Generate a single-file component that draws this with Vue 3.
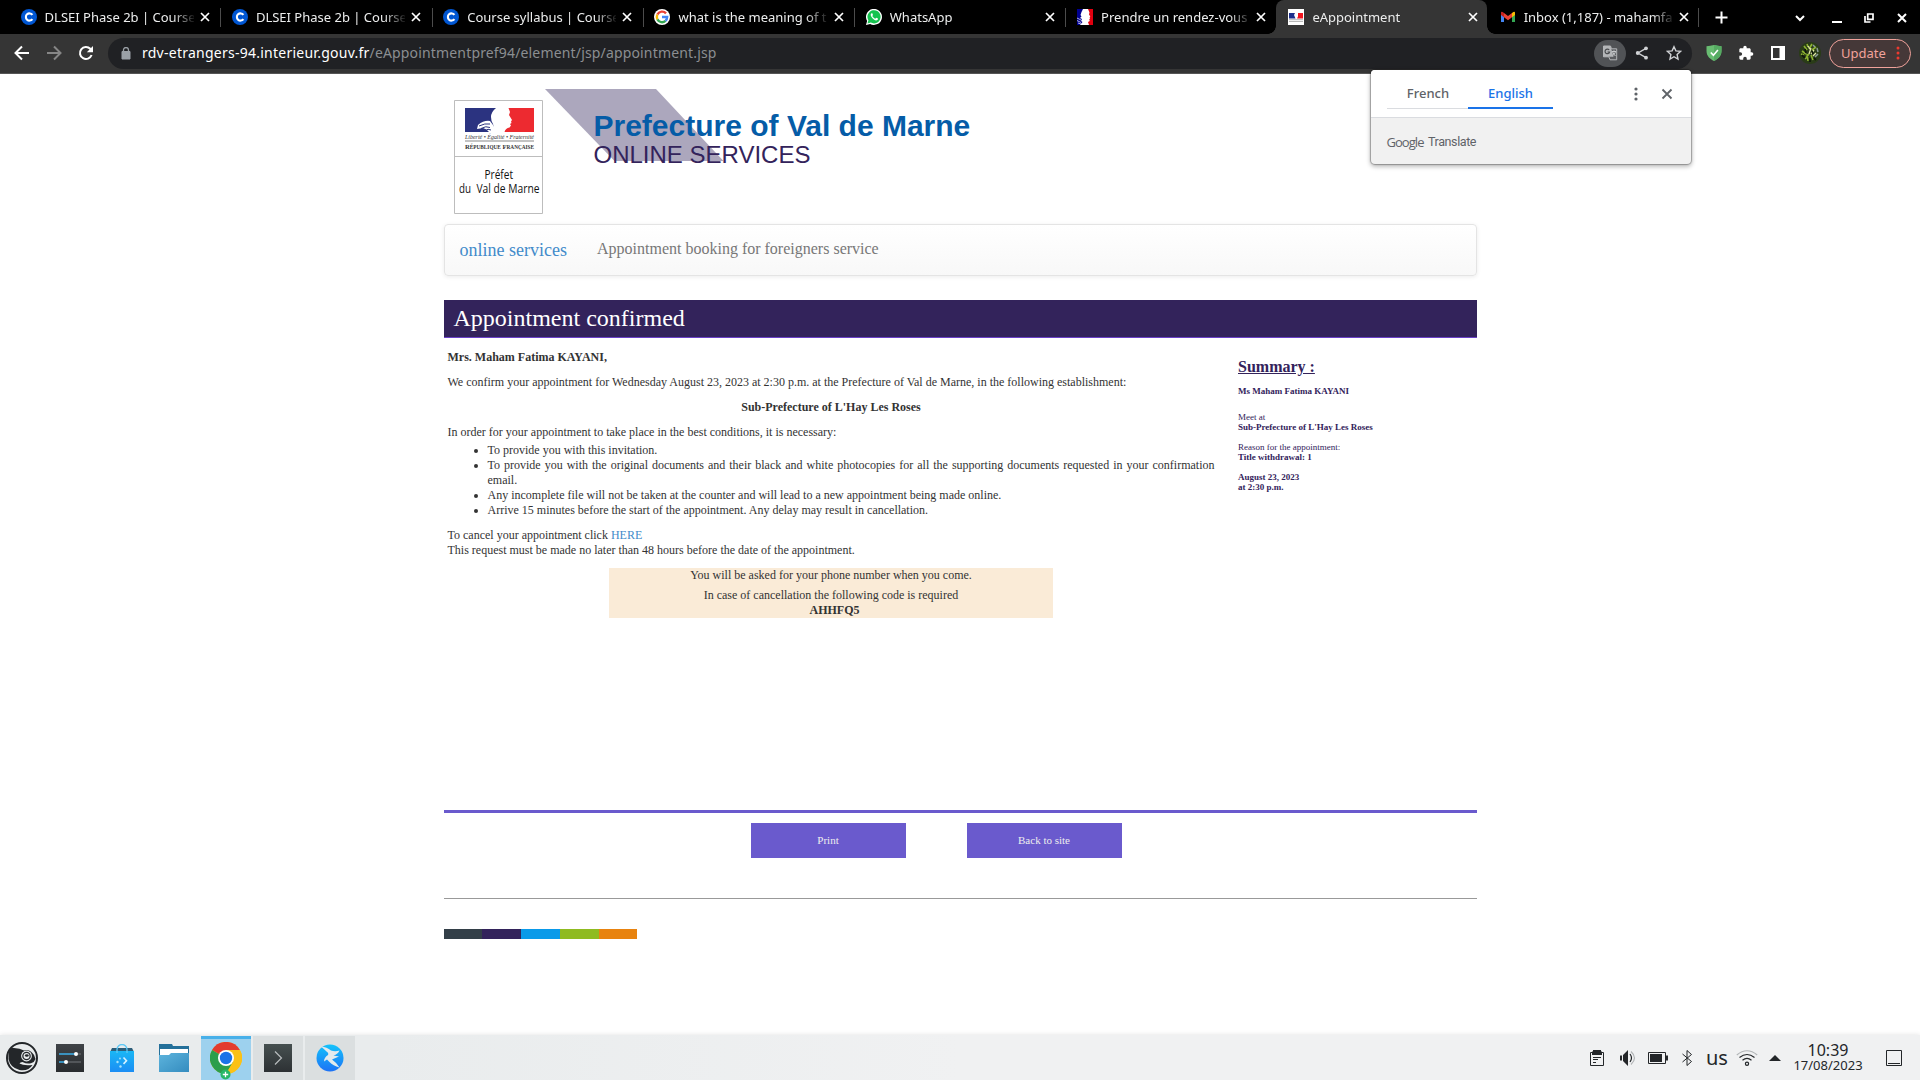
<script setup>
const tabs = [
  { icon: 'coursera', title: 'DLSEI Phase 2b | Coursera' },
  { icon: 'coursera', title: 'DLSEI Phase 2b | Coursera', sep: true },
  { icon: 'coursera', title: 'Course syllabus | Coursera', sep: true },
  { icon: 'google', title: 'what is the meaning of tit', sep: true },
  { icon: 'whatsapp', title: 'WhatsApp', sep: true },
  { icon: 'marianne', title: 'Prendre un rendez-vous', sep: true },
  { icon: 'pref', title: 'eAppointment', active: true },
  { icon: 'gmail', title: 'Inbox (1,187) - mahamfatima' },
]
const stripes = ['#333f48', '#33235b', '#0a9ae9', '#8fbb21', '#e8830f']
</script>

<template>
  <div class="screen">
    <div class="tabstrip">
      <div v-for="(t, i) in tabs" :key="i" class="tab" :class="{ active: t.active, sep: t.sep }">
        <svg v-if="t.icon === 'coursera'" class="fav" viewBox="0 0 16 16">
          <circle cx="8" cy="8" r="8" fill="#0056d2" />
          <path d="M11.4 10.1A3.6 3.6 0 1 1 11.4 5.9" fill="none" stroke="#fff" stroke-width="2.1" />
        </svg>
        <svg v-else-if="t.icon === 'google'" class="fav" viewBox="0 0 16 16">
          <circle cx="8" cy="8" r="8" fill="#fff" />
          <g fill="none" stroke-width="2.4">
            <path d="M12 4.4A5.2 5.2 0 0 0 3.4 5.6" stroke="#ea4335" />
            <path d="M3.4 5.6A5.2 5.2 0 0 0 3.4 10.4" stroke="#fbbc05" />
            <path d="M3.4 10.4A5.2 5.2 0 0 0 11.5 11.8" stroke="#34a853" />
            <path d="M11.5 11.8A5.2 5.2 0 0 0 13.2 8H8" stroke="#4285f4" />
          </g>
        </svg>
        <svg v-else-if="t.icon === 'whatsapp'" class="fav" viewBox="0 0 16 16">
          <path d="M0 16L1.1 12A8 8 0 1 1 4.1 14.9Z" fill="#fff" />
          <path d="M1.5 14.5l.9-3.2A6.6 6.6 0 1 1 4.8 13.600Z" fill="#15c34f" />
          <path d="M5.500 4.200c-1.200.8-1 2.300.2 4 1.500 2.200 3.700 3.600 5.200 3.100 1-.4 1.200-1.200 1.100-1.700l-1.800-.9-.9 1.100c-1.300-.4-2.500-1.600-3-2.700l.7-1-.7-1.800z" fill="#fff" />
        </svg>
        <svg v-else-if="t.icon === 'marianne'" class="fav" viewBox="0 0 16 16">
          <path d="M0 0h16v16H0z" fill="#fff" />
          <path d="M0 0h6L4.500 3 3.500 6l1 1.500L3 9l2 1-1 2 1.500 1L3 16H0z" fill="#000091" />
          <path d="M11 0h5v16h-4l-1-3 1.800-1-.6-1.500.8-1-.4-1 .7-1L12 5.500l.5-2z" fill="#e1000f" />
          <path d="M0 9l4 2M0 11.500l4 2M1 14l3 1" stroke="#fff" stroke-width=".7" />
        </svg>
        <svg v-else-if="t.icon === 'pref'" class="fav" viewBox="0 0 16 16">
          <path d="M0 0h16v16H0z" fill="#fff" />
          <path d="M1 4h6L6 6l1.500 3.500H1z" fill="#1d2f8c" />
          <path d="M10 4h5v5.500H9l1-2z" fill="#f21620" />
          <path d="M1 10.700h14M1 12.500h14" stroke="#999" stroke-width=".7" />
        </svg>
        <svg v-else class="fav" viewBox="0 0 16 16">
          <path d="M1 3v10h3V6.500z" fill="#4285f4" />
          <path d="M15 3v10h-3V6.500z" fill="#34a853" />
          <path d="M12 4l1.300-1Q15 2 15 4v2l-3 2.200z" fill="#fbbc04" />
          <path d="M4 4L2.700 3Q1 2 1 4v2l3 2.200z" fill="#c5221f" />
          <path d="M4 3.900l4 3 4-3v4.300l-4 3-4-3z" fill="#ea4335" />
        </svg>
        <span class="title">{{ t.title }}</span>
        <svg class="x" viewBox="0 0 10 10"><path d="M1 1l8 8M9 1l-8 8" /></svg>
      </div>
      <div class="tab-end">
        <svg width="13" height="13" viewBox="0 0 13 13"><path d="M6.500.5v12M.5 6.500h12" stroke="#fff" stroke-width="2" /></svg>
      </div>
      <div class="win">
        <svg width="12" height="16" viewBox="0 0 12 16"><path d="M2 6l4 4 4-4" fill="none" stroke="#fff" stroke-width="2" /></svg>
        <svg width="10" height="16" viewBox="0 0 10 16"><path d="M0 12h10" stroke="#fff" stroke-width="2" /></svg>
        <svg width="10" height="16" viewBox="0 0 10 16"><path d="M3.700 4h5.300v5.300H3.700zM1 6v6h5.500" fill="none" stroke="#fff" stroke-width="1.700" /></svg>
        <svg width="10" height="16" viewBox="0 0 10 16"><path d="M1 4l8 8M9 4l-8 8" stroke="#fff" stroke-width="2" /></svg>
      </div>
    </div>

    <div class="toolbar">
      <div class="nav">
        <svg width="16" height="16" viewBox="0 0 16 16"><path d="M15 8H2M8 1.500L1.500 8 8 14.500" fill="none" stroke="#fff" stroke-width="2" /></svg>
        <svg width="16" height="16" viewBox="0 0 16 16"><path d="M1 8h13M8 1.500L14.500 8 8 14.500" fill="none" stroke="#868686" stroke-width="2" /></svg>
        <svg width="16" height="16" viewBox="0 0 16 16"><path d="M13.600 10A6 6 0 1 1 12.300 3.800L14 5.500" fill="none" stroke="#fff" stroke-width="2" /><path d="M15 1v6.200H8.800z" fill="#fff" /></svg>
      </div>
      <div class="omnibox">
        <svg width="10" height="13" viewBox="0 0 10 13"><path d="M1 4.500h8V12H1z" fill="#9aa0a6" stroke="#9aa0a6" stroke-linejoin="round" /><path d="M2.500 5V3a2.500 2.500 0 0 1 5 0v2" fill="none" stroke="#9aa0a6" stroke-width="1.300" /></svg>
        <span class="url"><b>rdv-etrangers-94.interieur.gouv.fr</b><i>/eAppointmentpref94/element/jsp/appointment.jsp</i></span>
        <span class="tr-btn">
          <svg width="16" height="16" viewBox="0 0 16 16"><path d="M1.500 1h7l1 2.800h5.200v11H8l-1.200-3H1.500z" fill="#5b5d60" stroke="#b4b6b8" /><path d="M1 1h7.500l3 10.700H1z" fill="#b4b6b8" /><path d="M7.200 5A2.300 2.300 0 1 0 7.600 7H5.500" fill="none" stroke="#4a4c4f" stroke-width="1.200" /><path d="M10 6.500h4M12 5.300v1.200M13.400 6.700c-.4 1.800-1.500 3.200-2.700 4M10.700 7c.5 1.600 1.600 3 2.800 4" fill="none" stroke="#c6c8ca" /></svg>
        </span>
        <svg class="share" width="14" height="14" viewBox="0 0 14 14"><path d="M11 2.300L3 7l8 4.700" fill="none" stroke="#d0d2d5" stroke-width="1.400" /><g fill="#d0d2d5"><circle cx="11" cy="2.300" r="1.900" /><circle cx="2.700" cy="7" r="1.900" /><circle cx="11" cy="11.700" r="1.900" /></g></svg>
        <svg class="star" width="16" height="16" viewBox="0 0 16 16"><path d="M8 1.700l1.900 4.200 4.600.5-3.400 3.100.9 4.500-4-2.300L4 14l.9-4.500L1.500 6.400l4.600-.5z" fill="none" stroke="#d0d2d5" stroke-width="1.400" /></svg>
      </div>
      <div class="ext">
        <svg width="16" height="16" viewBox="0 0 16 16"><path d="M8 0c2.500.7 5 1.200 7.500 1.200V6c0 5-3.500 8-7.500 10C4 14 .5 11 .5 6V1.200C3 1.200 5.500.7 8 0z" fill="#68bc71" /><path d="M8 0c2.500.7 5 1.200 7.500 1.200V6c0 5-3.500 8-7.500 10z" fill="#56ab62" /><path d="M4.800 7.500l2.600 2.800 4.500-5.300" fill="none" stroke="#fff" stroke-width="1.600" /></svg>
        <svg width="16" height="16" viewBox="0 0 24 24"><path d="M20.500 11H19V7c0-1.100-.9-2-2-2h-4V3.500a2.500 2.500 0 0 0-5 0V5H4c-1.100 0-2 .9-2 2v3.800h1.500a2.700 2.700 0 0 1 0 5.400H2V20c0 1.100.9 2 2 2h3.800v-1.500a2.700 2.700 0 0 1 5.400 0V22H17c1.100 0 2-.9 2-2v-4h1.500a2.500 2.500 0 0 0 0-5z" fill="#fff" /></svg>
        <svg width="16" height="16" viewBox="0 0 16 16"><path d="M1 1h14v14H1z" fill="#fff" /><path d="M3 3h6.500v10H3z" fill="#353535" /></svg>
        <svg width="22" height="22" viewBox="0 0 22 22">
          <circle cx="11" cy="11" r="11" fill="#2a3c18" />
          <path d="M5 4l3 4M13 2l-3 5M17 5l-4 3M3 9l4 3M6 17l4-5M12 13l2 5M8 12l1 7M2 12l3 1M8 2l1 3" stroke="#8eb431" stroke-width="1.600" />
          <path d="M9 4l2 3M15 8l-3 4M12 6l-2 6M17 11l-3 3" stroke="#dfe5a5" stroke-width="1.300" />
          <path d="M3 13l3 3M6 7l1 4M15 16l2 2M11 16v4M13 9l1 3" stroke="#0f180a" stroke-width="1.800" />
          <path d="M18 6l1 4M16 15l3-3M14 3l2 2" stroke="#8d9c9a" stroke-width="1.500" />
        </svg>
      </div>
      <div class="update">
        <span>Update</span>
        <svg width="4" height="16" viewBox="0 0 4 16" fill="#ee3a2f"><circle cx="2" cy="3" r="1.500" /><circle cx="2" cy="8" r="1.500" /><circle cx="2" cy="13" r="1.500" /></svg>
      </div>
    </div>

    <div class="popup">
      <div class="pop-head">
        <span class="lang">French</span>
        <span class="lang on">English</span>
        <svg class="dots" width="4" height="14" viewBox="0 0 4 14" fill="#5f6368"><circle cx="2" cy="2" r="1.600" /><circle cx="2" cy="7" r="1.600" /><circle cx="2" cy="12" r="1.600" /></svg>
        <svg class="pclose" width="12" height="12" viewBox="0 0 12 12"><path d="M1.500 1.500l9 9M10.500 1.500l-9 9" stroke="#5f6368" stroke-width="1.800" /></svg>
      </div>
      <div class="pop-foot"><b>Google</b><span>Translate</span></div>
    </div>

    <main class="page">
      <header>
        <svg class="band" width="180" height="72" viewBox="0 0 180 72"><path d="M0 0h111l67.500 72H69.500z" fill="#aca7bd" /></svg>
        <svg class="logo" width="90" height="115" viewBox="0 0 90 115">
          <path d="M.5.500h88v113H.5z" fill="#fff" stroke="#bdbdbd" /><path d="M0 56.500h89" stroke="#bdbdbd" />
          <path d="M11 8h31q-5 4-5 9 0 4 2 7l2 8H11z" fill="#2b3380" />
          <path d="M54.500 8H80v24H50.500q1-4 5-4.500l1.500-2-1-1.500 1.500-1-.5-1.500 1-1.500-3-5 1-3z" fill="#ed2a30" />
          <path d="M24 25q6-5 12-4l3 4 4 7H35q-2-3-6-4l-6 1z" fill="#fff" />
          <path d="M25 26q6-3 11-2M27 28.500q5-3 9-1M31 31q3-3 6-1" fill="none" stroke="#2b3380" stroke-width="1" />
          <text x="11" y="38.500" textLength="69" lengthAdjust="spacingAndGlyphs" class="motto">Liberté • Égalité • Fraternité</text>
          <path d="M11 41h69" stroke="#555" stroke-width=".7" />
          <text x="11" y="48.500" textLength="69" lengthAdjust="spacingAndGlyphs" class="rf">R<tspan class="sc">ÉPUBLIQUE</tspan> F<tspan class="sc">RANÇAISE</tspan></text>
          <text x="30.500" y="78.500" textLength="28.500" lengthAdjust="spacingAndGlyphs" class="pf">Préfet</text>
          <text x="5" y="93" textLength="12" lengthAdjust="spacingAndGlyphs" class="pf">du</text>
          <text x="22.500" y="93" textLength="63" lengthAdjust="spacingAndGlyphs" class="pf">Val de Marne</text>
        </svg>
        <div class="names">
          <h1>Prefecture of Val de Marne</h1>
          <h2>ONLINE SERVICES</h2>
        </div>
      </header>

      <nav class="navbar">
        <a class="brand">online services</a>
        <span>Appointment booking for foreigners service</span>
      </nav>

      <h3 class="banner">Appointment confirmed</h3>

      <div class="cols">
        <section class="letter">
          <p><b>Mrs. Maham Fatima KAYANI,</b></p>
          <p>We confirm your appointment for Wednesday August 23, 2023 at 2:30 p.m. at the Prefecture of Val de Marne, in the following establishment:</p>
          <p class="mid"><b>Sub-Prefecture of L'Hay Les Roses</b></p>
          <p class="lead">In order for your appointment to take place in the best conditions, it is necessary:</p>
          <ul>
            <li>To provide you with this invitation.</li>
            <li>To provide you with the original documents and their black and white photocopies for all the supporting documents requested in your confirmation email.</li>
            <li>Any incomplete file will not be taken at the counter and will lead to a new appointment being made online.</li>
            <li>Arrive 15 minutes before the start of the appointment. Any delay may result in cancellation.</li>
          </ul>
          <p>To cancel your appointment click <a>HERE</a><br />This request must be made no later than 48 hours before the date of the appointment.</p>
          <div class="code">
            <div>You will be asked for your phone number when you come.</div>
            <div class="second">In case of cancellation the following code is required<br /><b>AHHFQ5</b></div>
          </div>
        </section>
        <aside>
          <h4>Summary :</h4>
          <p class="who"><b>Ms Maham Fatima KAYANI</b></p>
          <p>Meet at<br /><b>Sub-Prefecture of L'Hay Les Roses</b></p>
          <p>Reason for the appointment:<br /><b>Title withdrawal: 1</b></p>
          <p><b>August 23, 2023<br />at 2:30 p.m.</b></p>
        </aside>
      </div>

      <div class="actions">
        <a>Print</a>
        <a>Back to site</a>
      </div>
      <div class="rule"></div>
      <div class="stripes"><i v-for="c in stripes" :key="c" :style="{ background: c }"></i></div>
    </main>

    <footer class="taskbar">
      <div class="launch">
        <span class="task first">
          <svg width="32" height="32" viewBox="0 0 32 32"><circle cx="16" cy="16" r="15" fill="#e9eced" stroke="#232629" stroke-width="2" /><path d="M2.500 9Q5 4.500 8 6q6 0 10 2.500 4-1.500 7.500 1.500 3.500 3 4 7-1 3-4 4-4 1.500-9-1-2.500 0-3 1.500 4 2.500 13 1.500-4 6.500-13 5Q4 25.500 2.500 17z" fill="#232629" /><circle cx="20.500" cy="14" r="5.400" fill="#e9eced" /><circle cx="20.500" cy="14" r="4.300" fill="#232629" /><circle cx="20.500" cy="14" r="3" fill="#e9eced" /><ellipse cx="20.800" cy="13.500" rx="1.900" ry="1.200" fill="#232629" /></svg>
        </span>
        <span class="task">
          <svg width="28" height="28" viewBox="0 0 28 28"><defs><linearGradient id="dk" x2="0" y2="1"><stop stop-color="#3f4347" /><stop offset="1" stop-color="#292c2f" /></linearGradient></defs><path d="M0 0h28v28H0z" fill="url(#dk)" /><path d="M3 10h17M3 18h7" stroke="#3daee9" stroke-width="1.600" /><path d="M20 10h5M10 18h15" stroke="#5d6266" stroke-width="1.600" /><circle cx="20" cy="10" r="2" fill="#fff" /><circle cx="10" cy="18" r="2" fill="#fff" /></svg>
        </span>
        <span class="task">
          <svg width="26" height="28" viewBox="0 0 26 28"><defs><linearGradient id="bl" x2="0" y2="1"><stop stop-color="#1ab7f5" /><stop offset="1" stop-color="#1b8df4" /></linearGradient></defs><path d="M3 4h20l2 4H1z" fill="#2d5e7a" /><path d="M1 7h24v21H1z" fill="url(#bl)" /><path d="M8 9V5.500a5 5 0 0 1 10 0V9" fill="none" stroke="#5ec8f5" stroke-width="1.300" /><path d="M14.500 13.500l3 3.200-3 3.200" fill="none" stroke="#d7f2ff" stroke-width="1.600" /><g fill="#a5e2fb"><circle cx="8.500" cy="18" r="1.200" /><circle cx="11" cy="14.500" r=".9" /><circle cx="11.500" cy="22.500" r="1.200" /></g></svg>
        </span>
        <span class="task">
          <svg width="30" height="28" viewBox="0 0 30 28"><defs><linearGradient id="fo" x2="1" y2="1"><stop stop-color="#5db4dd" /><stop offset="1" stop-color="#348cbf" /></linearGradient></defs><path d="M0 0h13l1 2h16v12H0z" fill="#24709a" /><path d="M1 5h28v7H1z" fill="#fff" /><path d="M0 11h10l2-2h18v19H0z" fill="url(#fo)" /></svg>
        </span>
        <span class="task open cur">
          <svg width="32" height="38" viewBox="0 0 32 38"><circle cx="16" cy="16" r="16" fill="#fbc116" /><path d="M16 16L2.100 8A16 16 0 0 1 29.900 8z" fill="#e33b2e" /><path d="M2.100 8A16 16 0 0 0 16 32l7-12-7-4z" fill="#2c9e4b" /><path d="M16 16V8h13.900A16 16 0 0 1 16 32l7-12z" fill="#fbc116" /><circle cx="16" cy="16" r="8" fill="#fff" /><circle cx="16" cy="16" r="6.200" fill="#1a73e8" /><circle cx="15.500" cy="32.500" r="5" fill="#27b768" /><path d="M15.500 29.800v5.400M12.800 32.500h5.400" stroke="#fff" stroke-width="1.300" /></svg>
        </span>
        <span class="task open">
          <svg width="28" height="28" viewBox="0 0 28 28"><defs><linearGradient id="tm" x2="0" y2="1"><stop stop-color="#465050" /><stop offset="1" stop-color="#2d3134" /></linearGradient></defs><path d="M0 0h28v28H0z" fill="url(#tm)" /><path d="M11 7.500l6.500 6.500-6.500 6.500" fill="none" stroke="#b9bdbf" stroke-width="1.200" /></svg>
        </span>
        <span class="task open">
          <svg width="28" height="28" viewBox="0 0 28 28"><defs><linearGradient id="kt" x2="0" y2="1"><stop stop-color="#14c3fb" /><stop offset="1" stop-color="#1d72f5" /></linearGradient></defs><circle cx="14" cy="14" r="13.500" fill="url(#kt)" /><path d="M5 2.500Q11 3 15 6.500 19 8 23.500 6.500 22 10 17.500 11.500L23 12.500 16 15.500Q21 19 23.500 23.500 17 21.500 13.500 18L11 15.500 8 17.500Q8 13.500 12 11 13 9 10.500 7.500 8 5 5 2.500z" fill="#e4eaed" /></svg>
        </span>
      </div>
      <div class="tray">
        <svg class="clip" width="14" height="16" viewBox="0 0 14 16"><path d="M.5 2.500h13v13H.5z" fill="none" stroke="#232629" /><path d="M3 0h8v1.500h1V5H2V1.500h1z" fill="#232629" /><path d="M3 7.500h8M3 9.500h5M3 12.500h3" stroke="#232629" /></svg>
        <svg class="vol" width="16" height="16" viewBox="0 0 16 16"><path d="M0 5.500h2v5H0zM3 5l5-5v16l-5-5z" fill="#232629" /><path d="M10 4q3 4 0 8" fill="none" stroke="#232629" stroke-width="1.200" /><path d="M11 1.500q7 6.500 0 13" fill="none" stroke="#b2b5b7" stroke-width="1.200" /></svg>
        <svg class="bat" width="20" height="12" viewBox="0 0 20 12"><path d="M.5.500h17v11H.5z" fill="none" stroke="#232629" /><path d="M2 2h12v8H2zM18 3.500h2v5h-2z" fill="#232629" /></svg>
        <svg class="bt" width="10" height="16" viewBox="0 0 10 16"><path d="M.5 4l9 7.500-4.500 4V.5l4.500 4-9 7.500" fill="none" stroke="#232629" /></svg>
        <span class="kb">us</span>
        <svg class="wifi" width="22" height="16" viewBox="0 0 22 16" fill="none" stroke="#232629" stroke-width="1.200"><path d="M.8 5q10.200-8.500 20.400 0" stroke="#b2b5b7" /><path d="M3.500 7.500q7.500-6 15 0M6.500 10.200q4.500-3.500 9 0" /><circle cx="11" cy="13.700" r="1.600" /></svg>
        <svg class="tri" width="12" height="6" viewBox="0 0 12 6"><path d="M6 0l6 6H0z" fill="#232629" /></svg>
        <div class="clock"><span>10:39</span><small>17/08/2023</small></div>
        <svg class="desk" width="16" height="16" viewBox="0 0 16 16"><path d="M.5.500h15v15H.5zM2 13.500h12" fill="none" stroke="#232629" /></svg>
      </div>
    </footer>
  </div>
</template>

<style>
body { margin: 0; overflow: hidden; background: #fff; }
</style>

<style scoped>
.screen { position: relative; width: 1920px; height: 1080px; display: flex; flex-direction: column; overflow: hidden; background: #fff; font-family: "Noto Sans", sans-serif; }
svg { display: block; flex: none; }
.tabstrip { height: 34px; background: #000; display: flex; padding-left: 8px; flex: none; }
.tab { position: relative; width: 211.3px; height: 34px; box-sizing: border-box; display: flex; align-items: center; padding-left: 12.600px; color: #eceded; font-size: 13px; }
.tab.sep::before { content: ""; position: absolute; left: 1px; top: 8px; width: 1px; height: 19px; background: #4c4c4c; }
.tab.active { background: #353535; border-radius: 8px 8px 0 0; }
.tab.active::before, .tab.active::after { content: ""; position: absolute; bottom: 0; width: 8px; height: 8px; }
.tab.active::before { left: -8px; background: radial-gradient(circle at 0 0, transparent 7.500px, #353535 8px); }
.tab.active::after { right: -8px; background: radial-gradient(circle at 100% 0, transparent 7.500px, #353535 8px); }
.fav { width: 16px; height: 16px; }
.title { width: 149px; margin-left: 8px; overflow: hidden; white-space: nowrap; line-height: 20px; -webkit-mask-image: linear-gradient(90deg, #000 128px, transparent 151px); mask-image: linear-gradient(90deg, #000 128px, transparent 151px); }
.x { width: 10px; height: 10px; margin-left: 6.300px; }
.x path { stroke: #fff; stroke-width: 1.700; fill: none; }
.tab-end { display: flex; align-items: center; padding-left: 16px; border-left: 1px solid #4c4c4c; height: 19px; margin-top: 8px; }
.tab-end svg { margin-top: -1px; }
.win { margin-left: auto; display: flex; align-items: center; padding-right: 13px; }
.win svg { margin-top: 1px; }
.win svg + svg { margin-left: 22px; }
.win svg:nth-child(2) { margin-left: 26px; }
.win svg:nth-child(4) { margin-left: 23px; }
.toolbar { height: 40px; box-sizing: border-box; border-bottom: 1px solid #555; background: #353535; display: flex; align-items: center; flex: none; padding-bottom: 1px; }
.nav { display: flex; gap: 16px; padding-left: 14px; width: 94px; }
.omnibox { width: 1584px; height: 31px; box-sizing: border-box; border-radius: 16px; background: #202124; display: flex; align-items: center; padding: 0 10px 0 13px; }
.url { margin-left: 11px; font-size: 14px; color: #fff; line-height: 20px; flex: 1; white-space: nowrap; }
.url b { font-weight: 400; letter-spacing: .25px; }
.url i { font-style: normal; color: #8b8e91; letter-spacing: .16px; }
.tr-btn { width: 32px; height: 27px; border-radius: 14px; background: #515356; display: flex; align-items: center; justify-content: center; }
.share { margin-left: 9px; }
.star { margin-left: 17px; }
.ext { display: flex; align-items: center; gap: 16px; padding-left: 14px; width: 123px; }
.ext svg:last-child { margin-left: -3px; }
.update { width: 82px; height: 29px; box-sizing: border-box; border: 1px solid #f0a29b; border-radius: 15px; background: #453838; display: flex; align-items: center; justify-content: space-between; padding: 0 10px 0 11px; color: #f1a29b; font-size: 13px; }
.popup { position: absolute; left: 1371px; top: 70px; width: 320px; height: 94px; border-radius: 4px; background: #f1f1f1; box-shadow: 0 0 1px 1px rgba(0,0,0,.28), 0 2px 4px 1px rgba(0,0,0,.25); overflow: visible; z-index: 2; }
.pop-head { height: 47px; background: #fff; border-bottom: 1px solid #dadce0; border-radius: 4px 4px 0 0; display: flex; align-items: center; padding-left: 16px; }
.lang { width: 81px; height: 39px; box-sizing: border-box; border-bottom: 1px solid #dadce0; align-self: flex-start; text-align: center; line-height: 46px; font-size: 13px; color: #5f6368; font-weight: 500; padding-left: 1px; }
.lang.on { width: 85px; border-bottom: 2px solid #1a73e8; color: #1a73e8; padding-left: 0; }
.dots { margin-left: 80.500px; }
.pclose { margin-left: 23.500px; }
.pop-foot { height: 47px; display: flex; align-items: center; padding-left: 15.500px; color: #5f6368; }
.pop-foot b { font: 500 13px "Open Sans", sans-serif; letter-spacing: -.95px; width: 41.500px; }
.pop-foot span { font: 12.500px Roboto, sans-serif; letter-spacing: -.4px; }
.page { flex: 1; width: 1033px; margin-left: 443.500px; font-family: "Liberation Serif", serif; font-size: 12px; line-height: 15px; color: #333; }
header { position: relative; height: 150px; display: flex; padding-left: 10.500px; box-sizing: border-box; padding-top: 26px; }
.band { position: absolute; left: 101.500px; top: 15px; }
.logo { position: relative; }
.motto { font: italic 5.500px "Liberation Serif", serif; fill: #333; }
.rf { font: bold 7px "Liberation Serif", serif; fill: #333; }
.sc { font-size: 5.500px; }
.pf { font: 500 12.500px "Open Sans", sans-serif; fill: #111; }
.names { position: relative; margin-left: 49.500px; font-family: "Liberation Sans", sans-serif; }
h1, h2, h3, h4, p, ul { margin: 0; }
h1 { font-size: 30px; line-height: 34px; font-weight: 700; color: #055ca7; margin-top: 9px; }
h2 { font-size: 24px; line-height: 26px; font-weight: 400; color: #33235b; margin-top: -1px; }
.navbar { height: 52px; box-sizing: border-box; border: 1px solid #e4e4e4; border-radius: 4px; background: linear-gradient(#fff, #f8f8f8); box-shadow: 0 1px 4px rgba(0,0,0,.08); display: flex; align-items: center; padding: 0 0 4px 15px; font-size: 16px; color: #777; }
.brand { font-size: 18px; color: #428bca; width: 137.500px; line-height: 20px; padding-top: 4px; }
.banner { margin-top: 24px; height: 37px; border-bottom: 1px solid #6a40c8; background: #33235b; color: #fff; font-size: 24px; font-weight: 400; line-height: 36px; padding-left: 10px; }
.cols { display: flex; height: 472px; }
.letter { width: 767px; padding: 12px 0 0 4px; text-align: justify; }
.letter p { margin-bottom: 10px; }
.letter .lead { margin-bottom: 3px; }
.letter .mid { text-align: center; }
ul { padding-left: 40px; margin-bottom: 10px; }
a { color: #428bca; }
.code { width: 444px; height: 50px; margin-left: 161.500px; background: #faebd7; text-align: center; }
.second { margin-top: 5px; }
.second b { padding-left: 7px; }
aside { padding: 19px 0 0 23.500px; color: #33235b; font-size: 9px; line-height: 10px; }
aside h4 { font-size: 16px; line-height: 20px; text-decoration: underline; margin-bottom: 9px; }
aside p { margin-bottom: 10px; }
aside .who { margin-bottom: 16px; }
.actions { border-top: 3px solid #6a5acd; padding-top: 10px; height: 75px; display: flex; padding-left: 307px; gap: 61px; }
.actions a { width: 155px; height: 35px; background: #6a5acd; color: #eee; font-size: 11px; line-height: 34px; text-align: center; }
.rule { height: 1px; background: #999; }
.stripes { display: flex; width: 194px; height: 10px; margin-top: 30px; }
.stripes i { flex: 1; }
.taskbar { height: 45px; flex: none; display: flex; justify-content: space-between; background: linear-gradient(90deg, #e9eced 20%, #f0f1f2 50%); box-shadow: 0 0 5px rgba(0,0,0,.12); position: relative; }
.launch { display: flex; padding-top: 1px; }
.task { width: 50px; height: 44px; margin-right: 2px; display: flex; align-items: center; justify-content: center; }
.task.first { width: 43px; }
.task.open { background: #dbdfe0; }
.task.cur { background: #9dd1ee; box-sizing: border-box; border-top: 3px solid #48b0e9; }
.task.cur svg { margin-top: 3px; }
.tray { display: flex; align-items: center; padding-right: 18px; color: #232629; }
.vol { margin-left: 15.500px; }
.bat { margin-left: 12px; }
.bt { margin-left: 14.500px; }
.kb { font-size: 20px; width: 24px; margin-left: 14px; line-height: 40px; }
.wifi { margin-left: 6px; }
.tri { margin-left: 11px; }
.clock { width: 80px; margin-left: 7px; display: flex; flex-direction: column; align-items: center; }
.clock span { font-size: 16px; line-height: 16px; }
.clock small { font-size: 13px; line-height: 15px; }
.desk { margin-left: 18px; }
</style>
